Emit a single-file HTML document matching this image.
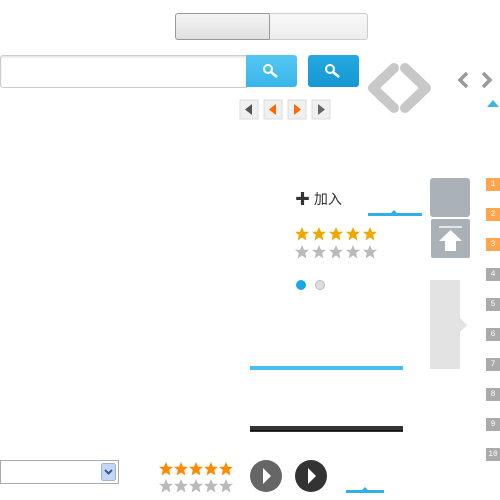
<!DOCTYPE html><html><head><meta charset="utf-8"><style>
body{margin:0;width:500px;height:500px;background:#fff;position:relative;overflow:hidden;font-family:"Liberation Sans","Noto Sans CJK SC",sans-serif}
.a{position:absolute}
.num{position:absolute;left:486px;width:14px;height:13px;color:#fff;font-size:8px;line-height:13px;text-align:center;background:#aaa;font-family:"Liberation Mono",monospace}
.o{background:#ffa64d}
</style></head><body>
<div class="a" style="left:175px;top:13px;width:94px;height:25px;border:1px solid #999;border-right:none;border-radius:3px 0 0 3px;background:linear-gradient(#f4f4f4,#e0e0e0)"></div>
<div class="a" style="left:269px;top:13px;width:97px;height:25px;border:1px solid #ccc;border-left:1px solid #999;border-radius:0 3px 3px 0;background:linear-gradient(#f8f8f8,#ededed)"></div>
<div class="a" style="left:0;top:55px;width:246px;height:31px;border:1px solid #ccc;border-right:none;border-radius:3px 0 0 3px;box-shadow:inset 0 1px 2px #ddd"></div>
<div class="a" style="left:246px;top:55px;width:51px;height:32px;background:linear-gradient(#55c8f3,#38b5ea);border-radius:0 3px 3px 0"></div>
<div class="a" style="left:308px;top:55px;width:51px;height:32px;background:linear-gradient(#25a9e0,#1597d3);border-radius:3px"></div>
<svg class="a" style="left:0;top:0" width="500" height="500">
<defs><path id="s" d="M0,-7 L2,-2.3 7,-2.2 3.2,1 4.4,6.5 0,3.5 -4.4,6.5 -3.2,1 -7,-2.2 -2,-2.3Z"/></defs>
<g stroke="#fff" stroke-width="2" fill="none"><circle cx="268" cy="69" r="4"/><line x1="271" y1="72" x2="277" y2="77" stroke-width="2.5"/><circle cx="330" cy="69" r="4"/><line x1="333" y1="72" x2="339" y2="77" stroke-width="2.5"/></g>
<g stroke="#c8c8c8" stroke-width="10" stroke-linecap="round" stroke-linejoin="round" fill="none"><polyline points="394,68 373,88 394,108"/><polyline points="405,68 426,88 405,108"/></g>
<g stroke="#999" stroke-width="3.5" fill="none"><polyline points="467,73 460,80 467,87"/><polyline points="483,73 490,80 483,87"/></g>
<polygon points="487,107 493,100 499,107" fill="#3ab5e6"/>
<g><rect x="240" y="100" width="18" height="19" fill="#f0f0f0" stroke="#ddd"/><polygon points="252,104 245,109.5 252,115" fill="#555"/>
<rect x="264" y="100" width="18" height="19" fill="#f0f0f0" stroke="#ddd"/><polygon points="276,104 269,109.5 276,115" fill="#f60"/>
<rect x="288" y="100" width="18" height="19" fill="#f0f0f0" stroke="#ddd"/><polygon points="294,104 301,109.5 294,115" fill="#f60"/>
<rect x="312" y="100" width="18" height="19" fill="#f0f0f0" stroke="#ddd"/><polygon points="318,104 325,109.5 318,115" fill="#666"/></g>
<rect x="368" y="213" width="54" height="3" fill="#2fb0e8"/><polygon points="391,213 394,210 397,213" fill="#2fb0e8"/>
<g fill="#f0a800"><use href="#s" x="302" y="234"/><use href="#s" x="319" y="234"/><use href="#s" x="336" y="234"/><use href="#s" x="353" y="234"/><use href="#s" x="370" y="234"/></g>
<g fill="#bbb"><use href="#s" x="302" y="252"/><use href="#s" x="319" y="252"/><use href="#s" x="336" y="252"/><use href="#s" x="353" y="252"/><use href="#s" x="370" y="252"/></g>
<g fill="#ff8a00"><use href="#s" x="166" y="469"/><use href="#s" x="181" y="469"/><use href="#s" x="196" y="469"/><use href="#s" x="211" y="469"/><use href="#s" x="226" y="469"/></g>
<g fill="#bbb"><use href="#s" x="166" y="486"/><use href="#s" x="181" y="486"/><use href="#s" x="196" y="486"/><use href="#s" x="211" y="486"/><use href="#s" x="226" y="486"/></g>
<circle cx="301" cy="285" r="5" fill="#1aa7e8"/><circle cx="320" cy="285" r="4.5" fill="#ddd" stroke="#bbb"/>
<rect x="430" y="178" width="40" height="39" rx="3" fill="#aab1b7"/>
<rect x="431" y="219" width="39" height="39" rx="2" fill="#aab1b7"/>
<rect x="439" y="226" width="23" height="2" fill="#e5e5e5"/>
<polygon points="450.5,230 462,241 456,241 456,251 445,251 445,241 439,241" fill="#fff"/>
<polygon points="430,280 460,280 460,318 467,325 460,332 460,369 430,369" fill="#e3e3e3"/>
<rect x="250" y="366" width="153" height="4" fill="#45bff0"/>
<rect x="250" y="426" width="153" height="6" fill="#333"/><rect x="250" y="430" width="153" height="1" fill="#111"/>
<circle cx="266" cy="476" r="16" fill="#666"/><polygon points="263,468 271,476 263,484" fill="#fff"/>
<circle cx="311" cy="476" r="16" fill="#333"/><polygon points="308,468 316,476 308,484" fill="#fff"/>
<rect x="346" y="490" width="38" height="3" fill="#2fb0e8"/><polygon points="362,490 365,487 368,490" fill="#2fb0e8"/>
<rect x="0.5" y="460.5" width="118" height="23" fill="none" stroke="#aaa"/>
<rect x="101.5" y="463.5" width="14" height="17" rx="2" fill="#c4d6f6" stroke="#9bb3dd"/>
<polyline points="105,470 108.5,473.5 112,470" fill="none" stroke="#3a5a8c" stroke-width="2"/>
</svg>
<div class="a" style="left:295px;top:188px;font-size:14px;color:#333"><b style="font-size:15px">✚</b> 加入</div>
<div class="num o" style="top:178px">1</div><div class="num o" style="top:208px">2</div><div class="num o" style="top:238px">3</div>
<div class="num" style="top:268px">4</div><div class="num" style="top:298px">5</div><div class="num" style="top:328px">6</div><div class="num" style="top:358px">7</div><div class="num" style="top:388px">8</div><div class="num" style="top:418px">9</div><div class="num" style="top:448px">10</div>
</body></html>
